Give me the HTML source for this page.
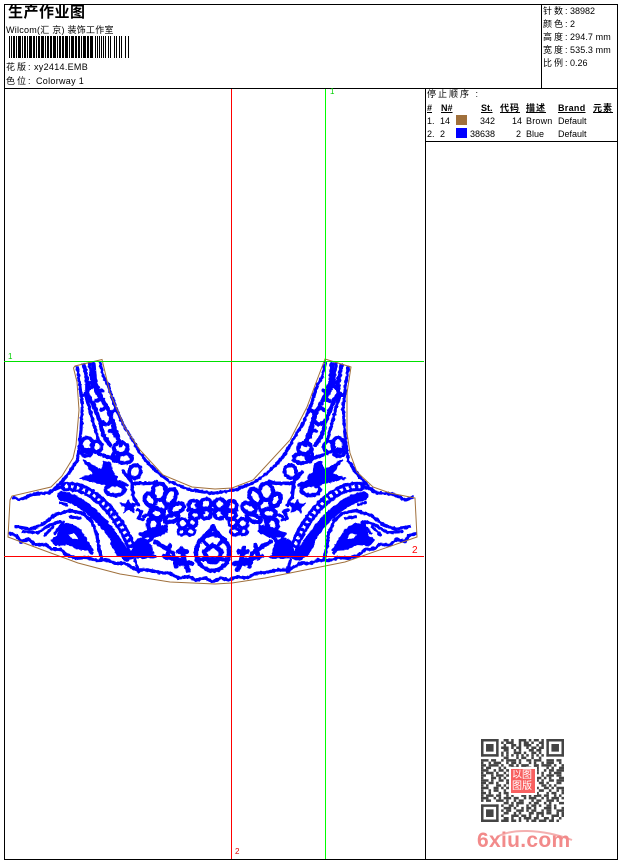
<!DOCTYPE html>
<html><head><meta charset="utf-8"><style>
html,body{margin:0;padding:0;background:#fff}
#p{position:relative;width:620px;height:860px;overflow:hidden;background:#fff;font-family:"Liberation Sans","WenQuanYi Zen Hei","Noto Sans CJK SC",sans-serif;font-size:9px;color:#000}
#p div{position:absolute;white-space:pre;line-height:12px}
.b{font-weight:bold;text-decoration:underline}
.l{letter-spacing:2px}
</style></head><body><div id="p">
<svg width="620" height="860" style="position:absolute;left:0;top:0" shape-rendering="crispEdges">
<defs><filter id="j" x="0" y="340" width="430" height="260" filterUnits="userSpaceOnUse"><feTurbulence type="fractalNoise" baseFrequency=".35" numOctaves="1" seed="4"/><feDisplacementMap in="SourceGraphic" scale="3" xChannelSelector="R" yChannelSelector="G"/></filter></defs>
<g fill="#000">
<rect x="4" y="4" width="614" height="1"/><rect x="4" y="859" width="614" height="1"/>
<rect x="4" y="4" width="1" height="856"/><rect x="617" y="4" width="1" height="856"/>
<rect x="4" y="88" width="614" height="1"/><rect x="541" y="4" width="1" height="85"/>
<rect x="425" y="88" width="1" height="772"/><rect x="425" y="141" width="193" height="1"/>
</g>
<path d="M9 47H130" stroke="#000" stroke-width="22" fill="none" stroke-dasharray="1 1 1 1 2 1 1 1 3 1 1 1 2 1 1 1 3 1 2 1 1 1 2 1 3 1 1 1 2 1 2 1 3 1 1 1 2 1 2 1 3 1 1 1 3 1 2 1 2 1 1 1 3 1 2 1 3 2 1 1 1 1 1 1 1"/>
<rect x="456" y="115" width="11" height="10" fill="#a0703c"/>
<rect x="456" y="128" width="11" height="10" fill="#0000ff"/>
<g shape-rendering="auto">
<g filter="url(#j)">
<g id="h" transform="translate(0 350) scale(.3333)" fill="none" stroke="#0000ff" stroke-width="9.5" stroke-linejoin="round" stroke-linecap="round">
<path d="M300 38L310 80 325 105 335 140 350 180 370 225 395 265 420 310 445 340 470 365 510 395 570 420 638 430"/>
<path d="M232 52L240 110 247 170 243 240 238 290 232 330 210 365 185 395 150 428 100 432 60 450 40 442"/>
<path d="M252 45L262 95 262 130 285 175 300 215 310 255 330 285" stroke-width="13"/>
<path d="M280 42L285 100 305 145 330 190 345 240 362 285" stroke-width="14"/>
<path d="M268 40L275 90 290 130 320 170 335 215 345 260" stroke-width="9"/>
<path d="M255 130L270 180 285 235 295 270" stroke-width="10"/>
<path d="M262 95l16 8M285 100l-16 14M305 145l-18 8M330 190l14-10M345 240l-16 4M300 215l14 6M262 130l-12 6M320 170l-16 10M290 130l16-8M335 215l-14 8" stroke-width="12"/>
<ellipse cx="262" cy="285" rx="18" ry="22" stroke-width="11"/><ellipse cx="290" cy="290" rx="15" ry="16" stroke-width="11"/><ellipse cx="260" cy="308" rx="16" ry="10" stroke-width="11"/><path d="M295 310L335 325" stroke-width="11"/>
<ellipse cx="362" cy="295" rx="20" ry="18" stroke-width="12"/><ellipse cx="372" cy="325" rx="24" ry="14" stroke-width="12"/><ellipse cx="348" cy="320" rx="10" ry="14" stroke-width="11"/>
<ellipse cx="405" cy="365" rx="17" ry="20" transform="rotate(20 405 365)" stroke-width="11"/>
<path d="M370 365L395 395 400 440 415 465M400 400L450 400 470 395" stroke-width="11"/>
<ellipse cx="345" cy="420" rx="28" ry="16" stroke-width="12"/>
<path d="M380 405L350 395" stroke-width="11"/>
<path fill="#0000ff" stroke="#0000ff" stroke-width="4" d="M240 385L280 372 250 330 285 350 305 360 312 335 332 340 338 368 352 380 350 398 320 405 285 396Z"/>
<path fill="#0000ff" stroke="#0000ff" stroke-width="3" d="M360 460L378 462 385 450 392 462 415 458 400 472 402 488 385 478 372 488 375 472Z"/>
<path d="M412 480L425 485 415 505 430 510M430 500L450 490" stroke-width="10"/>
<ellipse cx="478" cy="425" rx="20" ry="25" stroke-width="13"/><ellipse cx="510" cy="440" rx="16" ry="25" transform="rotate(30 510 440)" stroke-width="13"/><ellipse cx="530" cy="475" rx="14" ry="22" transform="rotate(65 530 475)" stroke-width="13"/><ellipse cx="450" cy="450" rx="14" ry="20" transform="rotate(-30 450 450)" stroke-width="13"/><ellipse cx="470" cy="490" rx="20" ry="14" stroke-width="14"/><ellipse cx="515" cy="505" rx="22" ry="10" transform="rotate(-20 515 505)" stroke-width="13"/><ellipse cx="460" cy="525" rx="16" ry="20" stroke-width="14"/>
<path fill="#0000ff" stroke="#0000ff" stroke-width="5" d="M418 552L460 535 500 525 500 545 470 560 430 560Z"/>
<path d="M500 470L475 520 455 565 420 600" stroke-width="11"/>
<ellipse cx="548" cy="520" rx="14" ry="14" stroke-width="10"/><ellipse cx="578" cy="518" rx="12" ry="12" stroke-width="10"/><ellipse cx="545" cy="545" rx="10" ry="10" stroke-width="10"/><ellipse cx="572" cy="545" rx="13" ry="10" stroke-width="10"/>
<ellipse cx="582" cy="468" rx="16" ry="16" stroke-width="12"/><ellipse cx="618" cy="462" rx="16" ry="15" stroke-width="12"/><ellipse cx="585" cy="495" rx="15" ry="12" stroke-width="12"/><ellipse cx="618" cy="492" rx="15" ry="14" stroke-width="12"/><path d="M590 465L610 490M565 480H635" stroke-width="10"/>
<path d="M195 410C240 405 280 430 320 470 355 510 385 560 400 610" stroke-width="28"/>
<path d="M195 410C240 405 280 430 320 470 355 510 385 560 400 610" stroke="#fff" stroke-width="10" stroke-dasharray="8 10" stroke-linecap="butt"/>
<path d="M150 425L190 408" stroke-width="9"/>
<path d="M185 438C240 448 285 490 322 535 350 570 365 595 380 620" stroke-width="28"/>
<path d="M340 580L360 612 395 620" stroke-width="18"/>
<path d="M240 470l10 8M180 458l20 6M270 505l6 10" stroke-width="9"/>
<path d="M48 530L90 537 125 525 165 495 210 482 250 490 275 515 290 550 297 595 305 628" stroke-width="10"/>
<path d="M70 545L115 548 150 525 180 515M135 555L160 530M210 500L240 505" stroke-width="9"/>
<path fill="#0000ff" fill-rule="evenodd" stroke="#0000ff" stroke-width="6" d="M155 570L172 560 185 525 210 522 240 540 262 575 278 600 238 598 205 582 168 585ZM200 552L225 547 240 568 215 570Z"/>
<path d="M190 515L165 550M262 590L275 610" stroke-width="9"/>
<path d="M30 550L50 557 62 575 85 568 108 585 135 583 155 597 180 598 205 618 232 625 258 622 290 632 320 630 345 640 375 640 410 660 445 660 480 668 510 670 535 684 565 680 590 690 615 684 638 695" stroke-width="10"/>
<path d="M405 630L415 665" stroke-width="9"/>
<path d="M410 575L430 568 450 590 455 610 425 620 398 610 405 590Z" stroke-width="13" fill="#0000ff"/>
<path d="M420 590L440 610M412 608L430 575M370 620H465" stroke-width="10"/>
<path d="M465 575L490 590 520 610 528 650M510 585L500 625M490 618L540 630" stroke-width="13"/>
<path d="M545 595L555 640 565 660M535 605H560M525 640H575" stroke-width="15"/>
<path d="M638 552C600 560 582 590 590 625 600 650 620 662 638 662" stroke-width="13"/>
<path d="M638 585L612 605 625 635 638 635M598 628H638" stroke-width="13"/>
<path d="M640 530L605 570" stroke-width="13"/>
<path d="M590 590L600 570M612 575L625 590" stroke-width="10"/>
</g>
<use href="#h" transform="translate(425.5 0) scale(-1 1)"/>
</g>
<path fill="none" stroke="#a0703c" stroke-width="1" d="M102 359.5L75 366 73.5 368 77 382 79 410 76 445 73 458 62 476 51 487 12 496 10 500 8 537 40 549 78 563 120 574 170 582 215 584 232 583 265 578 305 570 345 562 417 537 415 498 390 493 373 487 357 472 350 453 347 433 347 393 351 367 325 359 317 380 307 407 290 440 253 480 232 488 215 489 192 487 163 475 140 450 125 428 110 393Z"/>
</g>
<rect x="231" y="89" width="1" height="770" fill="#ff0000"/>
<rect x="325" y="89" width="1" height="770" fill="#00ff00"/>
<rect x="4" y="361" width="420" height="1" fill="#00e000"/>
<rect x="4" y="556" width="420" height="1" fill="#ff0000"/>
<g transform="translate(481 739) scale(2.515)" fill="none" stroke="#444" stroke-width="1" shape-rendering="auto">
<path d="M0 .5H7M0 6.5H7M26 .5H33M26 6.5H33M0 26.5H7M0 32.5H7" />
<path d="M.5 0V7M6.5 0V7M26.5 0V7M32.5 0V7M.5 26V33M6.5 26V33"/>
<path stroke-width="3" d="M2 3.5H5M28 3.5H31M2 29.5H5"/>
<path d="M9 .5H25" stroke-dasharray="2 1 1 2 3 1 1 1 2 1"/>
<path d="M8 1.5H25" stroke-dasharray="1 1 3 2 1 1 2 1 1 2 2"/>
<path d="M9 2.5H25" stroke-dasharray="1 2 2 1 1 1 3 2 1 1"/>
<path d="M8 3.5H25" stroke-dasharray="3 1 1 1 2 2 1 1 2 1"/>
<path d="M9 4.5H25" stroke-dasharray="2 2 1 1 1 3 2 1"/>
<path d="M8 5.5H25" stroke-dasharray="1 1 1 2 3 1 1 2 2"/>
<path d="M8 6.5H25" stroke-dasharray="1 1 1 1 1 1 1 1"/>
<path d="M9 7.5H24" stroke-dasharray="2 3 1 1 2 2 1"/>
<path d="M0 8.5H33" stroke-dasharray="3 1 2 2 1 1 4 1 1 2 2 1 3 2"/>
<path d="M0 9.5H33" stroke-dasharray="1 2 1 1 3 2 1 1 2 1 1 3 1 1"/>
<path d="M0 10.5H33" stroke-dasharray="2 1 4 1 1 2 2 1 1 1 3 2"/>
<path d="M0 11.5H33" stroke-dasharray="1 1 2 3 1 1 1 2 3 1 2 1"/>
<path d="M0 12.5H33" stroke-dasharray="3 2 1 1 2 1"/>
<path d="M0 13.5H33" stroke-dasharray="1 1 3 1 1 2"/>
<path d="M0 14.5H33" stroke-dasharray="2 2 1 1 3 1"/>
<path d="M0 15.5H33" stroke-dasharray="1 3 2 1 1 1"/>
<path d="M0 16.5H33" stroke-dasharray="3 1 1 2 2 1"/>
<path d="M0 17.5H33" stroke-dasharray="2 1 2 1 1 3"/>
<path d="M0 18.5H33" stroke-dasharray="1 1 1 3 2 1"/>
<path d="M0 19.5H33" stroke-dasharray="3 2 2 1 1 1"/>
<path d="M0 20.5H33" stroke-dasharray="1 2 1 1 2 2"/>
<path d="M0 21.5H33" stroke-dasharray="2 1 1 3 1 1 2 2 3 1 1 1"/>
<path d="M0 22.5H33" stroke-dasharray="1 1 3 1 2 2 1 1 1 3 2 1"/>
<path d="M0 23.5H33" stroke-dasharray="3 2 1 1 1 1 3 1 2 2 1 1"/>
<path d="M0 24.5H33" stroke-dasharray="1 1 2 2 3 1 1 2 1 1 2 3"/>
<path d="M9 25.5H33" stroke-dasharray="2 1 1 1 3 2 1 1 2"/>
<path d="M8 26.5H33" stroke-dasharray="1 2 2 1 1 3 1 1 2 1"/>
<path d="M9 27.5H33" stroke-dasharray="3 1 1 2 1 1 2 1 1 3"/>
<path d="M8 28.5H33" stroke-dasharray="1 1 2 2 3 1 1 1 2 2"/>
<path d="M9 29.5H33" stroke-dasharray="2 2 1 1 1 3 2 1 3 1"/>
<path d="M8 30.5H33" stroke-dasharray="1 3 3 1 2 1 1 2 1 1"/>
<path d="M9 31.5H33" stroke-dasharray="2 1 1 2 1 1 3 1 2 2"/>
<path d="M8 32.5H33" stroke-dasharray="3 1 2 1 1 2 1 1 2 1"/>
</g>
<rect x="509" y="767" width="28" height="28" fill="#fff"/>
<rect x="511" y="769" width="24" height="24" fill="#f86060" shape-rendering="auto"/>
<path d="M497 837C510 829 540 828 572 840" fill="none" stroke="#f4b0b0" stroke-width="2" shape-rendering="auto"/>
</svg>
<div style="left:8px;top:4px;font-size:15px;line-height:17px;font-weight:bold;letter-spacing:.5px">生产作业图</div>
<div style="left:6px;top:24px;letter-spacing:.25px">Wilcom(汇 京) 装饰工作室</div>
<div class="l" style="left:6px;top:61px">花版:</div><div style="left:34px;top:61px;letter-spacing:.3px">xy2414.EMB</div>
<div class="l" style="left:6px;top:75px">色位:</div><div style="left:36px;top:75px;letter-spacing:.3px">Colorway 1</div>
<div class="l" style="left:543px;top:5px">针数:</div><div style="left:570px;top:5px">38982</div>
<div class="l" style="left:543px;top:18px">颜色:</div><div style="left:570px;top:18px">2</div>
<div class="l" style="left:543px;top:31px">高度:</div><div style="left:570px;top:31px;letter-spacing:.1px">294.7 mm</div>
<div class="l" style="left:543px;top:44px">宽度:</div><div style="left:570px;top:44px;letter-spacing:.1px">535.3 mm</div>
<div class="l" style="left:543px;top:57px">比例:</div><div style="left:570px;top:57px">0.26</div>
<div class="l" style="left:427px;top:88px">停止顺序 :</div>
<div class="b" style="left:427px;top:102px">#</div><div class="b" style="left:441px;top:102px">N#</div>
<div class="b" style="left:481px;top:102px">St.</div><div class="b" style="left:500px;top:102px;letter-spacing:1px">代码</div>
<div class="b" style="left:526px;top:102px;letter-spacing:1px">描述</div><div class="b" style="left:558px;top:102px;letter-spacing:.3px">Brand</div><div class="b" style="left:593px;top:102px;letter-spacing:1px">元素</div>
<div style="left:427px;top:115px">1.</div><div style="left:440px;top:115px">14</div><div style="left:480px;top:115px">342</div><div style="left:512px;top:115px">14</div><div style="left:526px;top:115px;letter-spacing:.2px">Brown</div><div style="left:558px;top:115px">Default</div>
<div style="left:427px;top:128px">2.</div><div style="left:440px;top:128px">2</div><div style="left:470px;top:128px">38638</div><div style="left:516px;top:128px">2</div><div style="left:526px;top:128px">Blue</div><div style="left:558px;top:128px">Default</div>
<div style="left:330px;top:86px;color:#00d000;font-size:8px">1</div>
<div style="left:8px;top:351px;color:#00d000;font-size:8px">1</div>
<div style="left:412px;top:545px;color:#ff0000;font-size:10px">2</div>
<div style="left:235px;top:846px;color:#e00000;font-size:8px">2</div>
<div style="left:512px;top:770px;color:#fff;font-size:10px;line-height:11px;white-space:pre-wrap;width:24px">以图
图版</div>
<div style="left:477px;top:829px;font-size:21px;line-height:24px;font-weight:bold;color:#f28a8a;letter-spacing:.3px">6xiu.com</div>
</div></body></html>
